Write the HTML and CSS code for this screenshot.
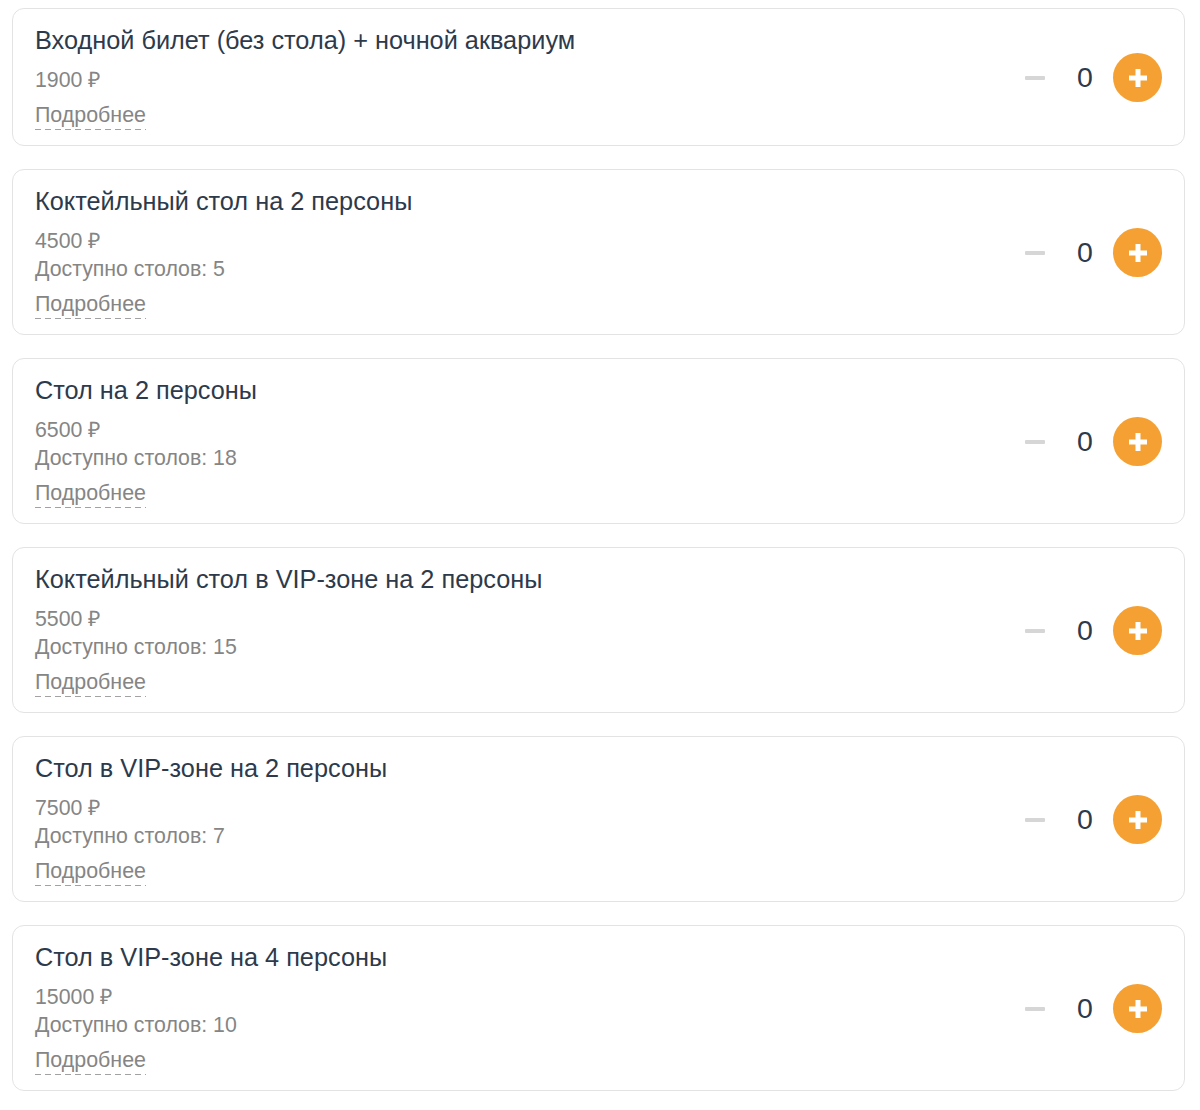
FILE: index.html
```html
<!DOCTYPE html>
<html lang="ru">
<head>
<meta charset="utf-8">
<title>Билеты</title>
<link rel="stylesheet" href="styles.css">
</head>
<body>
<div class="list">
  <div class="card">
    <div class="info">
      <div class="title">Входной билет (без стола) + ночной аквариум</div>
      <div class="line">1900 ₽</div>
      <div class="more"><span class="more-link">Подробнее</span></div>
    </div>
    <div class="counter">
      <span class="minus"><span class="minus-bar"></span></span>
      <span class="count">0</span>
      <span class="plus"><svg width="20" height="20" viewBox="0 0 20 20"><rect x="7.5" y="1" width="5" height="18" fill="#fff"/><rect x="1" y="7.5" width="18" height="5" fill="#fff"/></svg></span>
    </div>
  </div>
  <div class="card">
    <div class="info">
      <div class="title">Коктейльный стол на 2 персоны</div>
      <div class="line">4500 ₽</div>
      <div class="line">Доступно столов: 5</div>
      <div class="more"><span class="more-link">Подробнее</span></div>
    </div>
    <div class="counter">
      <span class="minus"><span class="minus-bar"></span></span>
      <span class="count">0</span>
      <span class="plus"><svg width="20" height="20" viewBox="0 0 20 20"><rect x="7.5" y="1" width="5" height="18" fill="#fff"/><rect x="1" y="7.5" width="18" height="5" fill="#fff"/></svg></span>
    </div>
  </div>
  <div class="card">
    <div class="info">
      <div class="title">Стол на 2 персоны</div>
      <div class="line">6500 ₽</div>
      <div class="line">Доступно столов: 18</div>
      <div class="more"><span class="more-link">Подробнее</span></div>
    </div>
    <div class="counter">
      <span class="minus"><span class="minus-bar"></span></span>
      <span class="count">0</span>
      <span class="plus"><svg width="20" height="20" viewBox="0 0 20 20"><rect x="7.5" y="1" width="5" height="18" fill="#fff"/><rect x="1" y="7.5" width="18" height="5" fill="#fff"/></svg></span>
    </div>
  </div>
  <div class="card">
    <div class="info">
      <div class="title">Коктейльный стол в VIP-зоне на 2 персоны</div>
      <div class="line">5500 ₽</div>
      <div class="line">Доступно столов: 15</div>
      <div class="more"><span class="more-link">Подробнее</span></div>
    </div>
    <div class="counter">
      <span class="minus"><span class="minus-bar"></span></span>
      <span class="count">0</span>
      <span class="plus"><svg width="20" height="20" viewBox="0 0 20 20"><rect x="7.5" y="1" width="5" height="18" fill="#fff"/><rect x="1" y="7.5" width="18" height="5" fill="#fff"/></svg></span>
    </div>
  </div>
  <div class="card">
    <div class="info">
      <div class="title">Стол в VIP-зоне на 2 персоны</div>
      <div class="line">7500 ₽</div>
      <div class="line">Доступно столов: 7</div>
      <div class="more"><span class="more-link">Подробнее</span></div>
    </div>
    <div class="counter">
      <span class="minus"><span class="minus-bar"></span></span>
      <span class="count">0</span>
      <span class="plus"><svg width="20" height="20" viewBox="0 0 20 20"><rect x="7.5" y="1" width="5" height="18" fill="#fff"/><rect x="1" y="7.5" width="18" height="5" fill="#fff"/></svg></span>
    </div>
  </div>
  <div class="card">
    <div class="info">
      <div class="title">Стол в VIP-зоне на 4 персоны</div>
      <div class="line">15000 ₽</div>
      <div class="line">Доступно столов: 10</div>
      <div class="more"><span class="more-link">Подробнее</span></div>
    </div>
    <div class="counter">
      <span class="minus"><span class="minus-bar"></span></span>
      <span class="count">0</span>
      <span class="plus"><svg width="20" height="20" viewBox="0 0 20 20"><rect x="7.5" y="1" width="5" height="18" fill="#fff"/><rect x="1" y="7.5" width="18" height="5" fill="#fff"/></svg></span>
    </div>
  </div>
</div>
</body>
</html>
```

FILE: styles.css
```css
html, body {
  background: #ffffff;
}
body {
  margin: 8px 15px 0 12px;
  font-family: "Liberation Sans", Arial, sans-serif;
  -webkit-font-smoothing: antialiased;
}
.list {
  display: flex;
  flex-direction: column;
  gap: 23px;
}
.card {
  display: flex;
  align-items: center;
  justify-content: space-between;
  border: 1px solid #e3e3e3;
  border-radius: 12px;
  padding: 16px 22px 15px 22px;
}
.info {
  display: flex;
  flex-direction: column;
  align-items: flex-start;
}
.title {
  font-size: 25.3px;
  line-height: 30px;
  color: #2d3a4b;
  margin-bottom: 11px;
}
.line {
  font-size: 21.3px;
  line-height: 28px;
  color: #858585;
}
.more {
  margin-top: 7px;
  font-size: 21.4px;
  line-height: 29px;
  color: #858585;
  height: 29px;
}
.more-link {
  display: inline-block;
  line-height: 28px;
  padding-bottom: 1px;
  background-image: repeating-linear-gradient(to right, #a2a2a2 0, #a2a2a2 6px, transparent 6px, transparent 10px);
  background-size: 100% 1px;
  background-position: left bottom;
  background-repeat: no-repeat;
}
.counter {
  display: flex;
  align-items: center;
}
.minus {
  width: 40px;
  height: 40px;
  display: flex;
  align-items: center;
  justify-content: center;
  margin-right: 5px;
}
.minus-bar {
  width: 20px;
  height: 4px;
  background: #d6d6d6;
  border-radius: 1px;
}
.count {
  width: 50px;
  text-align: center;
  font-size: 28.5px;
  color: #2d3a4b;
  margin-right: 3px;
}
.plus {
  width: 49px;
  height: 49px;
  border-radius: 50%;
  background: #f5a033;
  display: flex;
  align-items: center;
  justify-content: center;
}
.plus svg {
  display: block;
}
```
